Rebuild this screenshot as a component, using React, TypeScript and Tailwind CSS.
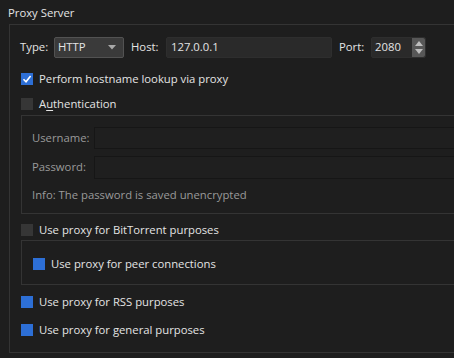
import React from "react";

type BoxProps = { checked?: boolean; blue?: boolean };

const Check = ({ checked, blue }: BoxProps) => {
  if (checked) {
    return (
      <span className="flex h-[12px] w-[12px] shrink-0 items-center justify-center bg-[#2d6fd6]">
        <svg width="10" height="10" viewBox="0 0 10 10">
          <path d="M1.5 5.2 L4 7.7 L8.6 2" fill="none" stroke="#ffffff" strokeWidth="1.6" />
        </svg>
      </span>
    );
  }
  return <span className={`h-[12px] w-[12px] shrink-0 ${blue ? "bg-[#2d6fd6]" : "bg-[#363636]"}`} />;
};

const CheckRow = ({ label, checked, blue, className }: BoxProps & { label: React.ReactNode; className?: string }) => (
  <div className={`flex h-[12px] items-center gap-[6px] ${className ?? ""}`}>
    <Check checked={checked} blue={blue} />
    <span className="whitespace-nowrap leading-none text-[#e4e4e4]">{label}</span>
  </div>
);

const App = () => {
  return (
    <div
      className="h-[358px] w-[454px] overflow-hidden bg-[#1e1e1e] text-[11.3px] text-[#e4e4e4]"
      style={{ fontFamily: '"Open Sans", "Noto Sans", sans-serif' }}
    >
      <div className="flex h-[24px] items-center pl-[8px] pt-[2px]">Proxy Server</div>
      <div className="ml-[9px] flex h-[329px] w-[480px] flex-col border-y border-l border-[#343434]">
        {/* type / host / port */}
        <div className="mt-[12px] flex h-[21px] items-center pl-[10px]">
          <span className="w-[34px]">Type:</span>
          <div className="flex h-[21px] w-[70px] items-center justify-between rounded-[2px] border border-[#525252] bg-[#3a3a3a] pl-[3px] pr-[7px]">
            <span>HTTP</span>
            <svg width="8" height="5" viewBox="0 0 8 5">
              <path d="M0 0 H8 L4 4.5 Z" fill="#a8a8a8" />
            </svg>
          </div>
          <span className="ml-[7px] w-[35px]">Host:</span>
          <div className="flex h-[21px] w-[166px] items-center rounded-[2px] border border-[#2e2e2e] bg-[#2a2a2a] pl-[4px]">
            127.0.0.1
          </div>
          <span className="ml-[7px] w-[32px]">Port:</span>
          <div className="flex h-[21px] w-[55px] items-stretch rounded-[2px] border border-[#2e2e2e] bg-[#2a2a2a]">
            <span className="flex flex-1 items-center pl-[3px]">2080</span>
            <div className="flex w-[13px] flex-col items-center justify-center gap-[3px] rounded-r-[2px] bg-[#575757]">
              <svg width="8" height="5" viewBox="0 0 8 5">
                <path d="M0 5 H8 L4 0 Z" fill="#bdbdbd" />
              </svg>
              <svg width="8" height="5" viewBox="0 0 8 5">
                <path d="M0 0 H8 L4 5 Z" fill="#bdbdbd" />
              </svg>
            </div>
          </div>
        </div>

        <CheckRow className="ml-[11px] mt-[15px]" checked label="Perform hostname lookup via proxy" />
        <CheckRow
          className="ml-[11px] mt-[13px]"
          label={
            <>
              A<span className="underline underline-offset-2">u</span>thentication
            </>
          }
        />

        {/* authentication box */}
        <div className="ml-[11px] mt-[5px] flex h-[99px] flex-col border-y border-l border-[#343434] pl-[10px] text-[#9a9a9a]">
          <div className="mt-[11px] flex items-center">
            <span className="w-[62px]">Username:</span>
            <div className="h-[22px] flex-1 border border-[#161616] bg-[#1f1f1f]" />
          </div>
          <div className="mt-[7px] flex items-center">
            <span className="w-[62px]">Password:</span>
            <div className="h-[23px] flex-1 border border-[#161616] bg-[#1f1f1f]" />
          </div>
          <div className="mt-[8px] leading-[16px]">Info: The password is saved unencrypted</div>
        </div>

        <CheckRow className="ml-[11px] mt-[10px]" label="Use proxy for BitTorrent purposes" />

        {/* bittorrent box */}
        <div className="ml-[11px] mt-[4px] flex h-[45px] flex-col border-y border-l border-[#343434] pl-[11px]">
          <CheckRow className="mt-[17px]" blue label="Use proxy for peer connections" />
        </div>

        <CheckRow className="ml-[11px] mt-[11px]" blue label="Use proxy for RSS purposes" />
        <CheckRow className="ml-[11px] mt-[16px]" blue label="Use proxy for general purposes" />
      </div>
    </div>
  );
};

export default App;
